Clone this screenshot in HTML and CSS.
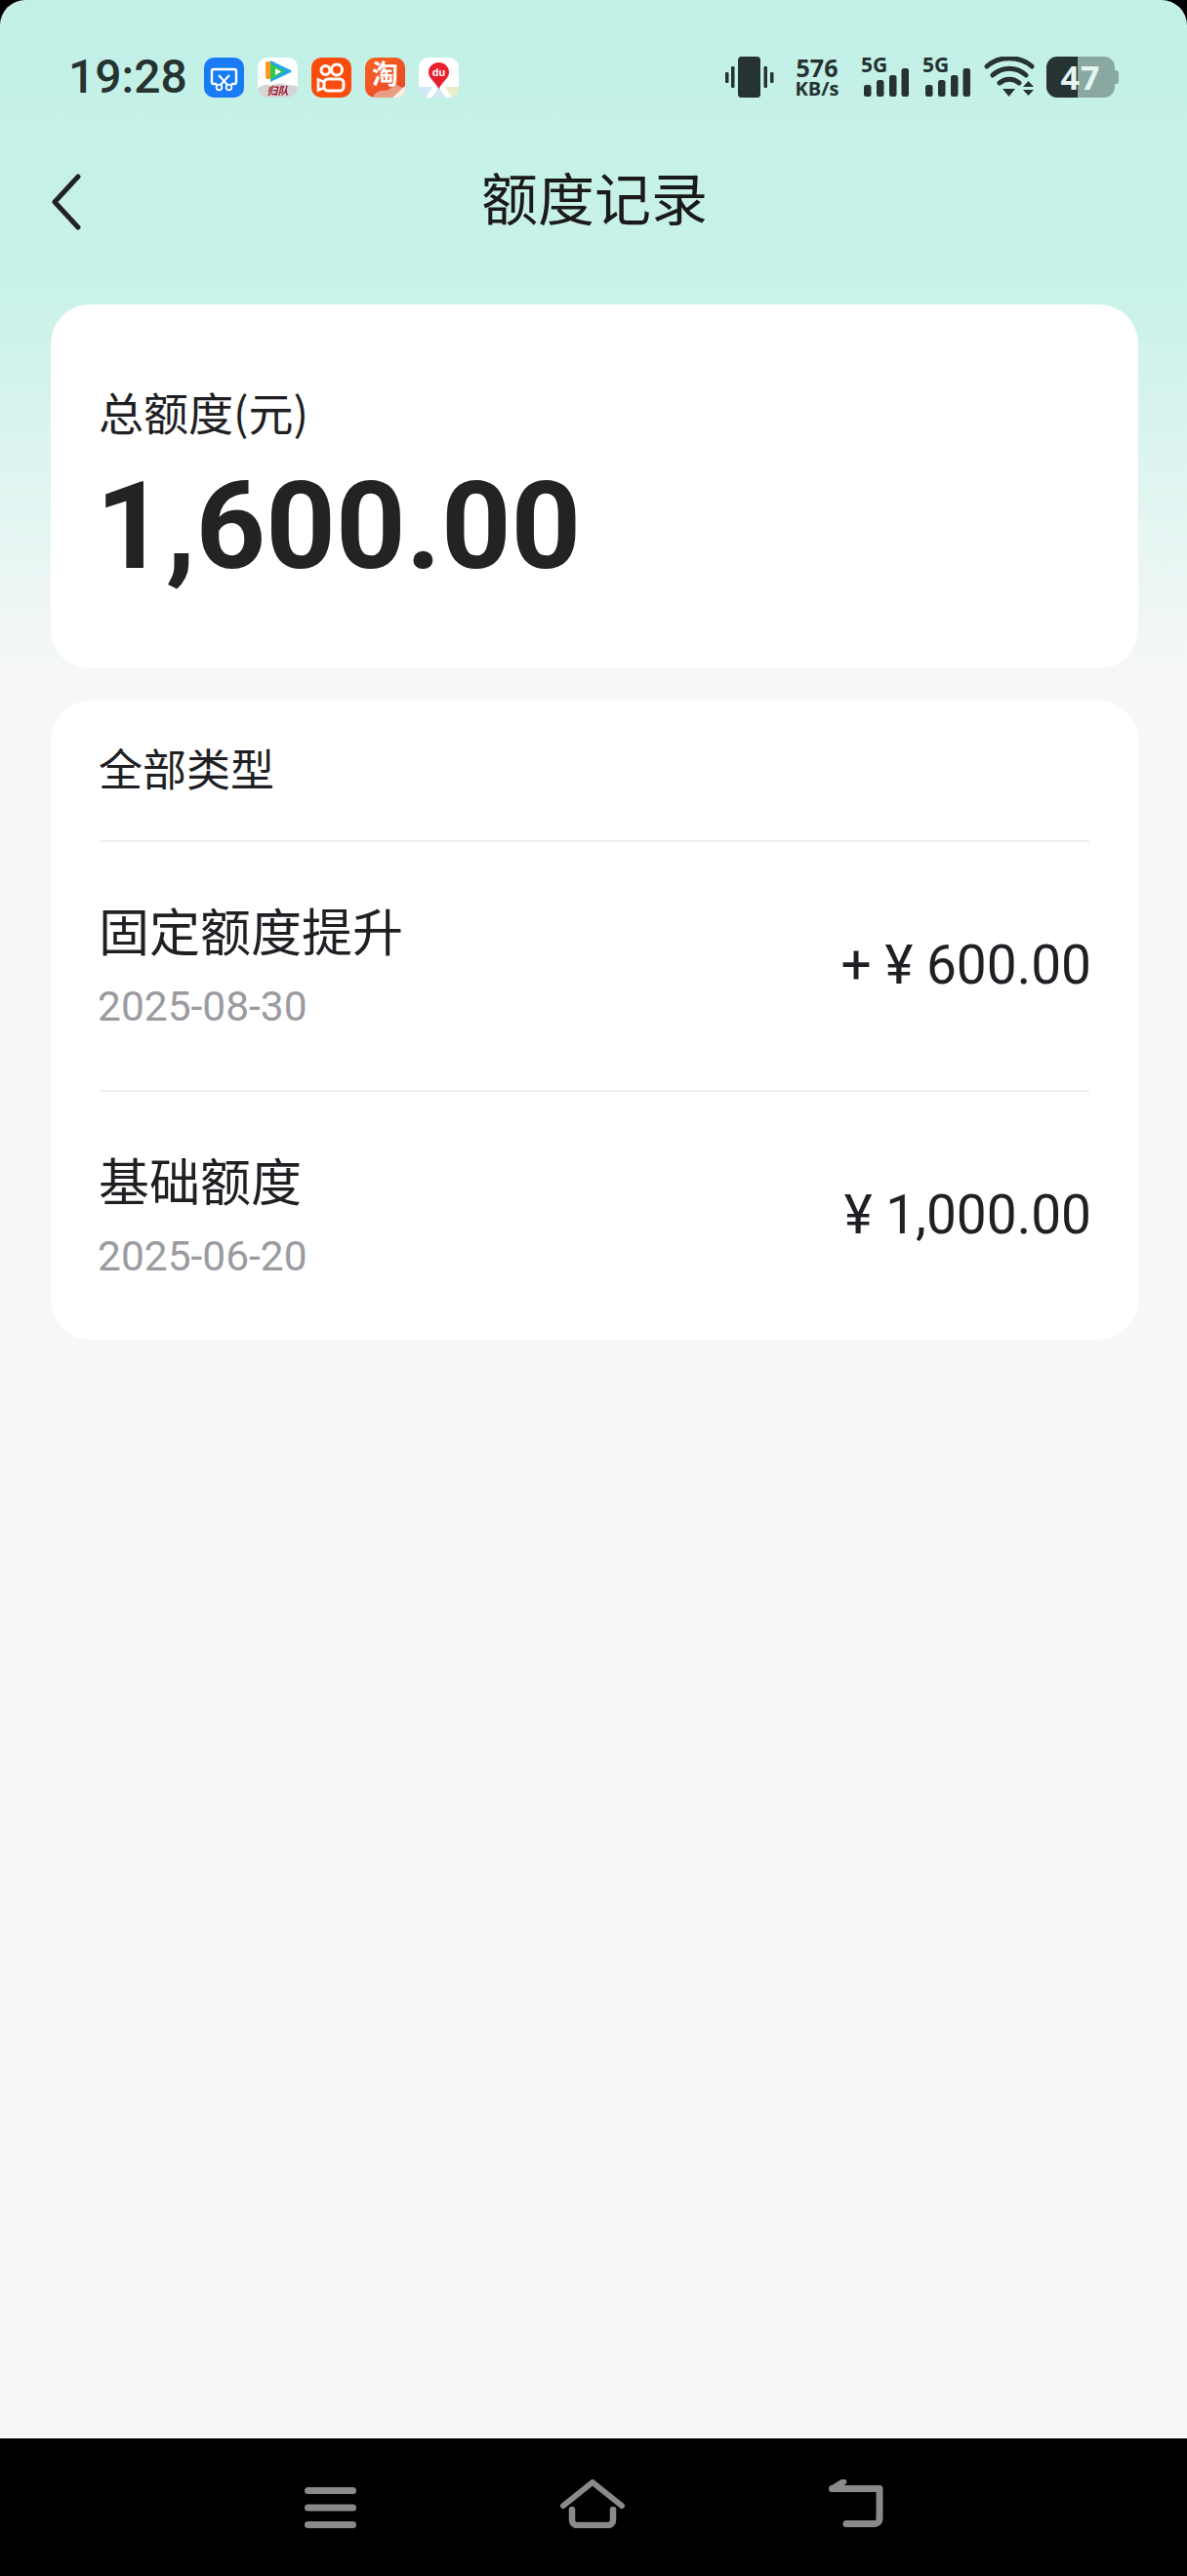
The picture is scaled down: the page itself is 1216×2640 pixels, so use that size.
FILE: index.html
```html
<!DOCTYPE html>
<html lang="zh-CN">
<head>
    <meta charset="UTF-8">
    <meta name="viewport" content="width=device-width, initial-scale=1.0">
    <title>额度记录</title>
    <link rel="stylesheet" href="styles.css">
</head>
<body>
    <div class="screen">
        <div class="status-bar">
            <div class="status-left">
                <span class="time">19:28</span>
                <div class="app-icons">
                    <svg class="app-icon" viewBox="0 0 41 41">
                        <rect width="41" height="41" rx="10" fill="#1a7cf5"/>
                        <path d="M13 27H10a2 2 0 0 1-2-2V14a2 2 0 0 1 2-2h21a2 2 0 0 1 2 2v11a2 2 0 0 1-2 2h-3" fill="none" stroke="#fff" stroke-width="2.4"/>
                        <path d="M15 18l9 10M26 18l-9 10" stroke="#fff" stroke-width="2" fill="none"/>
                        <circle cx="15.500" cy="30.500" r="2.800" fill="none" stroke="#fff" stroke-width="1.800"/>
                        <circle cx="25.500" cy="30.500" r="2.800" fill="none" stroke="#fff" stroke-width="1.800"/>
                    </svg>
                    <svg class="app-icon" viewBox="0 0 41 41">
                        <rect width="41" height="41" rx="10" fill="#fff"/>
                        <path d="M0 32c6-6 10-3 15-4s8-3 12-1 9 0 14 3v1a10 10 0 0 1-10 10H10a10 10 0 0 1-10-9z" fill="#d4d6d6"/>
                        <path d="M10 4h7v18h-7a2 2 0 0 1-2-2V6a2 2 0 0 1 2-2z" fill="#ff9a1f"/>
                        <path d="M13 3l20 9.500a1.500 1.500 0 0 1 0 3L13 25z" fill="#1fa8f0"/>
                        <path d="M13 6l15 8-15 9z" fill="#2fc84a"/>
                        <path d="M18 11l6 3.500-6 3.500z" fill="#fff"/>
                        <text class="icon-script" x="20.500" y="38">归队</text>
                    </svg>
                    <svg class="app-icon" viewBox="0 0 41 41">
                        <rect width="41" height="41" rx="10" fill="#fa4c0c"/>
                        <circle cx="14.500" cy="13" r="4.500" fill="none" stroke="#fff" stroke-width="3"/>
                        <circle cx="26" cy="12.500" r="5.500" fill="none" stroke="#fff" stroke-width="3"/>
                        <rect x="13" y="22" width="20" height="12" rx="4" fill="none" stroke="#fff" stroke-width="3"/>
                        <path d="M13 25l-6-2.500v11l6-2.500" fill="none" stroke="#fff" stroke-width="2.600"/>
                    </svg>
                    <svg class="app-icon" viewBox="0 0 41 41">
                        <defs>
                            <linearGradient id="taobaoFill" x1="0" y1="0" x2="1" y2="1">
                                <stop offset="0" stop-color="#f7641f"/>
                                <stop offset="1" stop-color="#e8442a"/>
                            </linearGradient>
                        </defs>
                        <rect width="41" height="41" rx="10" fill="url(#taobaoFill)"/>
                        <path d="M8 41c1-5 9-9 14-7l10-6 9 4v1a8 8 0 0 1-8 8z" fill="#e9b39a" opacity=".8"/>
                        <path d="M28 41l13-12v4a8 8 0 0 1-8 8z" fill="#fbeee6"/>
                        <text class="icon-tao" x="20.500" y="27">淘</text>
                    </svg>
                    <svg class="app-icon" viewBox="0 0 41 41">
                        <rect width="41" height="41" rx="10" fill="#fff"/>
                        <path d="M0 30h14l-7 11a10 10 0 0 1-7-10z" fill="#cfe9f2"/>
                        <path d="M27 30h14v1a10 10 0 0 1-7 10z" fill="#e6efc8"/>
                        <path d="M20.500 30l-7 11h14z" fill="#cfe9f2"/>
                        <path d="M20.500 5c6 0 10.500 4.500 10.500 10 0 6-6 9-10.500 17C16 24 10 21 10 15c0-5.500 4.500-10 10.500-10z" fill="#e8202c"/>
                        <text class="icon-du" x="20.500" y="18.500">du</text>
                    </svg>
                </div>
            </div>
            <div class="status-right">
                <svg class="vibrate-icon" viewBox="0 0 50 42">
                    <rect x="13" y="0" width="23" height="42" rx="3.500" fill="#263331"/>
                    <rect x="6" y="10" width="3.500" height="22" rx="1" fill="#263331"/>
                    <rect x="0" y="16" width="3.500" height="11" rx="1" fill="#263331"/>
                    <rect x="39.500" y="10" width="3.500" height="22" rx="1" fill="#263331"/>
                    <rect x="46" y="16" width="3.500" height="11" rx="1" fill="#263331"/>
                </svg>
                <div class="net-speed">
                    <span class="net-value">576</span>
                    <span class="net-unit">KB/s</span>
                </div>
                <div class="signal">
                    <span class="signal-type">5G</span>
                    <svg class="signal-bars" viewBox="0 0 46 29">
                        <rect x="0" y="17" width="7.500" height="12" rx="2.500" fill="#263331"/>
                        <rect x="13" y="12" width="7.500" height="17" rx="2.500" fill="#263331"/>
                        <rect x="26" y="7" width="7.500" height="22" rx="2.500" fill="#263331"/>
                        <rect x="38.500" y="0" width="7.500" height="29" rx="2.500" fill="#263331"/>
                    </svg>
                </div>
                <div class="signal">
                    <span class="signal-type">5G</span>
                    <svg class="signal-bars" viewBox="0 0 46 29">
                        <rect x="0" y="17" width="7.500" height="12" rx="2.500" fill="#263331"/>
                        <rect x="13" y="12" width="7.500" height="17" rx="2.500" fill="#263331"/>
                        <rect x="26" y="7" width="7.500" height="22" rx="2.500" fill="#263331"/>
                        <rect x="38.500" y="0" width="7.500" height="29" rx="2.500" fill="#263331"/>
                    </svg>
                </div>
                <svg class="wifi-icon" viewBox="0 0 52 42">
                    <path d="M3 10C15 -1 37 -1 49 10M9 19C19 10 33 10 43 19M16 27c6-5 14-5 20 0" fill="none" stroke="#263331" stroke-width="5" stroke-linecap="round"/>
                    <path d="M19 33h13l-6.500 8z" fill="#263331"/>
                    <path d="M40 31l5.500-6 5.500 6zM40 34h11l-5.500 6z" fill="#263331"/>
                </svg>
                <div class="battery">
                    <span class="battery-level">47</span>
                </div>
            </div>
        </div>

        <div class="page-header">
            <svg class="back-icon" viewBox="0 0 32 58">
                <path d="M28 3L4 29l24 26" fill="none" stroke="#222" stroke-width="5" stroke-linecap="round" stroke-linejoin="round"/>
            </svg>
            <h1 class="page-title">额度记录</h1>
        </div>

        <div class="card total-card">
            <div class="total-label">总额度(元)</div>
            <div class="total-value">1,600.00</div>
        </div>

        <div class="card list-card">
            <div class="list-head">全部类型</div>
            <div class="record">
                <div class="record-info">
                    <div class="record-name">固定额度提升</div>
                    <div class="record-date">2025-08-30</div>
                </div>
                <div class="record-amount">+ ¥ 600.00</div>
            </div>
            <div class="record">
                <div class="record-info">
                    <div class="record-name">基础额度</div>
                    <div class="record-date">2025-06-20</div>
                </div>
                <div class="record-amount">¥ 1,000.00</div>
            </div>
        </div>
    </div>

    <div class="nav-bar">
        <svg class="nav-menu" viewBox="0 0 53 42">
            <path d="M3.500 3.500h46M3.500 21h46M3.500 38.500h46" fill="none" stroke="#8a8a8a" stroke-width="7" stroke-linecap="round"/>
        </svg>
        <svg class="nav-home" viewBox="0 0 66 50">
            <path d="M3 27L33 3l30 24" fill="none" stroke="#8a8a8a" stroke-width="6" stroke-linecap="round" stroke-linejoin="round"/>
            <path d="M12 31v11a5 5 0 0 0 5 5h32a5 5 0 0 0 5-5V31" fill="none" stroke="#8a8a8a" stroke-width="6.500" stroke-linecap="round"/>
        </svg>
        <svg class="nav-back" viewBox="0 0 56 50">
            <path d="M18 45.500h29a5 5 0 0 0 5-5V9.500H3.500" fill="none" stroke="#8a8a8a" stroke-width="7" stroke-linecap="round" stroke-linejoin="round"/>
            <path d="M15 2.500L3.500 9.500" fill="none" stroke="#8a8a8a" stroke-width="6.500" stroke-linecap="round"/>
        </svg>
    </div>
</body>
</html>
```

FILE: styles.css
```css
* {
    box-sizing: border-box;
}
html, body {
    margin: 0;
    background-color: #000;
}
body {
    width: 1216px;
    height: 2640px;
    display: flex;
    flex-direction: column;
    overflow: hidden;
    font-family: Roboto, "Noto Sans CJK SC", sans-serif;
    color: #1f1f24;
}
.screen {
    flex: 1;
    padding: 58px 50px 0 52px;
    border-radius: 26px 26px 0 0;
    background: linear-gradient(180deg, #c2f0e6 0, #c9f2e8 300px, #f5f7f8 680px);
}

/* status bar */
.status-bar {
    height: 42px;
    display: flex;
    justify-content: space-between;
    align-items: center;
    padding-right: 20px;
}
.status-left {
    display: flex;
    align-items: center;
    padding-left: 18px;
}
.time {
    width: 139px;
    font-size: 48px;
    font-weight: 500;
    line-height: 42px;
    color: #263331;
}
.app-icons {
    display: flex;
    gap: 14px;
}
.app-icon {
    width: 41px;
    height: 41px;
    overflow: visible;
}
.icon-script {
    font-family: "Noto Sans CJK SC", sans-serif;
    font-size: 11px;
    font-weight: 700;
    font-style: italic;
    text-anchor: middle;
    fill: #a3142a;
}
.icon-tao {
    font-family: "Noto Sans CJK SC", sans-serif;
    font-size: 27px;
    font-weight: 700;
    text-anchor: middle;
    fill: #fff;
}
.icon-du {
    font-family: "Liberation Sans", sans-serif;
    font-size: 11px;
    font-weight: 700;
    text-anchor: middle;
    fill: #fff;
}
.status-right {
    display: flex;
    align-items: center;
    color: #263331;
}
.vibrate-icon {
    width: 50px;
    height: 42px;
    margin-right: 19px;
}
.net-speed {
    width: 50px;
    height: 42px;
    margin-right: 20px;
    display: flex;
    flex-direction: column;
    align-items: center;
    font-family: "Open Sans", sans-serif;
    font-weight: 700;
}
.net-value {
    font-size: 25px;
    line-height: 23px;
}
.net-unit {
    font-size: 20px;
    line-height: 20px;
    white-space: nowrap;
}
.signal {
    position: relative;
    width: 49px;
    height: 42px;
    margin-right: 14px;
}
.signal-type {
    display: block;
    font-family: "Open Sans", sans-serif;
    font-size: 21px;
    font-weight: 700;
    line-height: 16px;
}
.signal-bars {
    position: absolute;
    right: 0;
    bottom: 1px;
    width: 46px;
    height: 29px;
}
.wifi-icon {
    width: 52px;
    height: 42px;
    margin-right: 12px;
}
.battery {
    position: relative;
    width: 70px;
    height: 42px;
    border-radius: 11px;
    margin-right: 4px;
    background: linear-gradient(90deg, #263331 46%, #8aa8a2 46%);
    text-align: center;
}
.battery::after {
    content: "";
    position: absolute;
    top: 14px;
    right: -4px;
    width: 4px;
    height: 14px;
    border-radius: 0 3px 3px 0;
    background-color: #8aa8a2;
}
.battery-level {
    font-family: "Open Sans", sans-serif;
    font-size: 34px;
    font-weight: 700;
    line-height: 42px;
    letter-spacing: 1px;
    color: #e3f5f0;
}

/* header */
.page-header {
    position: relative;
    height: 80px;
    margin-top: 61px;
    margin-bottom: 71px;
    text-align: center;
}
.back-icon {
    position: absolute;
    left: 0;
    top: 17px;
    width: 32px;
    height: 58px;
}
.page-title {
    margin: 0;
    font-family: "Noto Sans CJK SC", sans-serif;
    font-size: 58px;
    font-weight: 400;
    line-height: 80px;
    color: #1a1a1a;
}

/* cards */
.card {
    background-color: #fff;
    border-radius: 40px;
    padding: 0 50px;
}
.total-card {
    height: 373px;
    padding-top: 84px;
    margin-bottom: 33px;
}
.total-label {
    font-family: "Noto Sans CJK SC", sans-serif;
    font-size: 46px;
    line-height: 50px;
    margin-left: -1px;
}
.total-value {
    margin: 34px 0 0 -4px;
    font-size: 125px;
    font-weight: 700;
    line-height: 120px;
    color: #232323;
}
.list-head {
    padding: 39px 0 44px;
    font-family: "Noto Sans CJK SC", sans-serif;
    font-size: 45px;
    line-height: 60px;
    margin-left: -1px;
}
.record {
    display: flex;
    justify-content: space-between;
    align-items: center;
    padding: 58px 0 60px;
    border-top: 2px solid #eef0f2;
}
.record-name {
    font-family: "Noto Sans CJK SC", sans-serif;
    font-size: 52px;
    line-height: 64px;
    margin-left: -1px;
}
.record-date {
    margin: 22px 0 0 -2px;
    font-size: 42.500px;
    line-height: 50px;
    color: #9b9b9f;
}
.record-amount {
    margin-right: -2px;
    font-size: 55px;
    line-height: 64px;
    white-space: nowrap;
}

/* bottom nav */
.nav-bar {
    height: 141px;
    flex-shrink: 0;
    display: flex;
    justify-content: center;
    align-items: flex-start;
    gap: 209px;
    padding-top: 42px;
    background-color: #000;
}
.nav-menu {
    width: 53px;
    height: 42px;
    margin-top: 8px;
}
.nav-home {
    width: 66px;
    height: 50px;
}
.nav-back {
    width: 56px;
    height: 50px;
}
```
